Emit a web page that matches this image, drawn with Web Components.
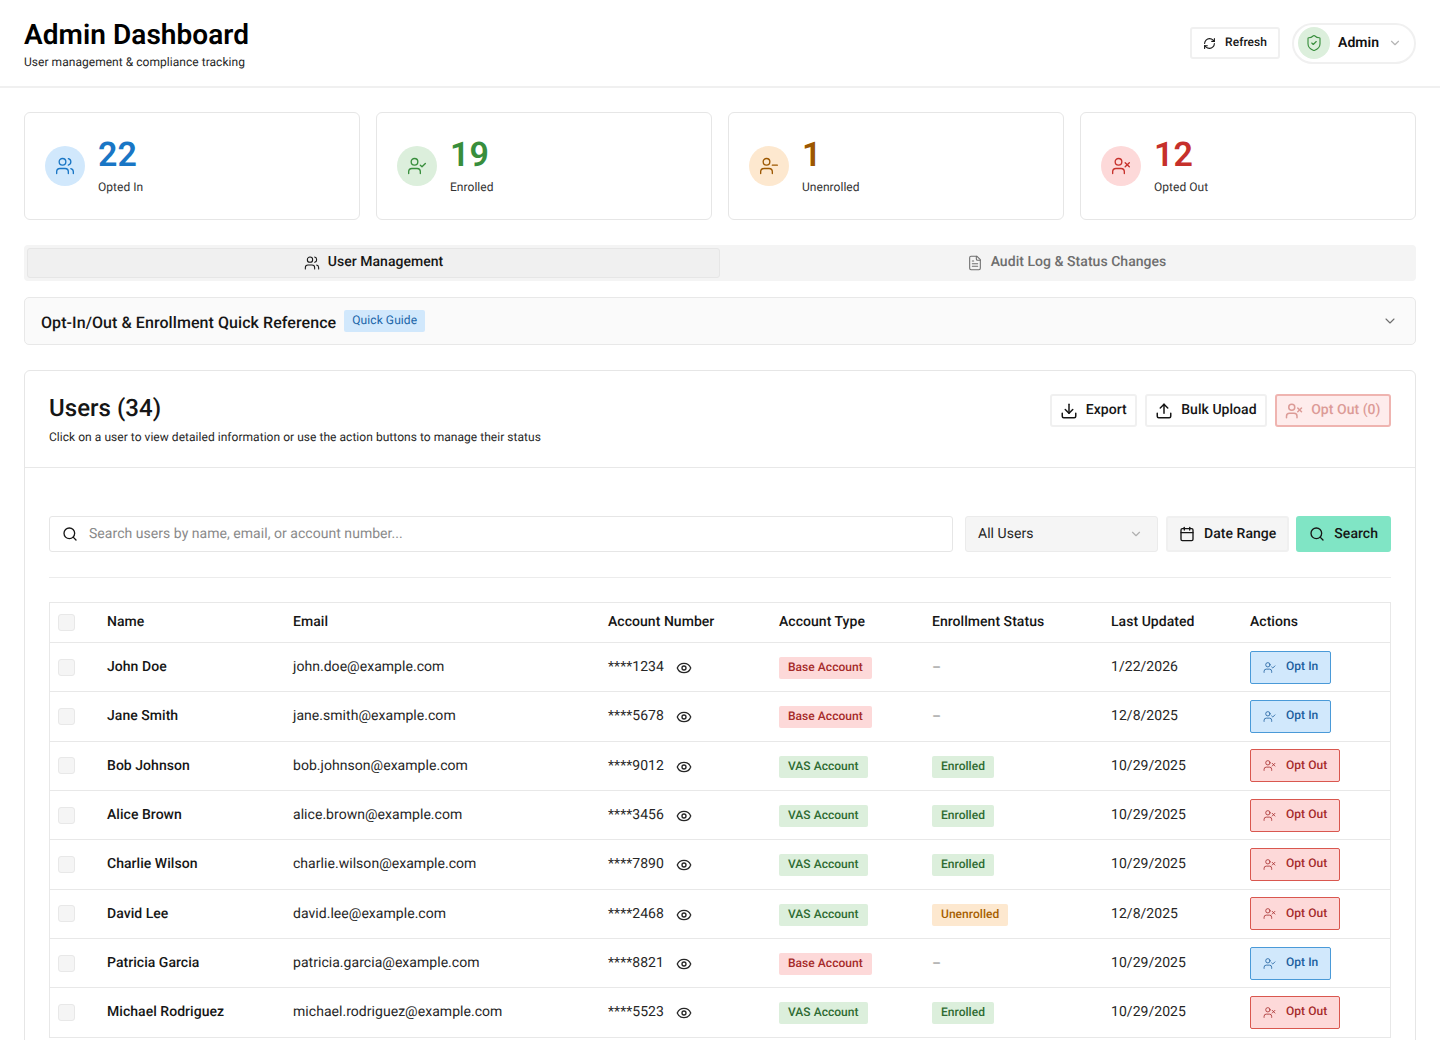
<!DOCTYPE html>
<html lang="en">
<head>
<meta charset="utf-8">
<title>Admin Dashboard</title>
<style>
  html, body { margin: 0; background: #fff; color: #161616; font-family: Roboto, "Liberation Sans", sans-serif; text-rendering: geometricPrecision; letter-spacing: .04px; }
</style>
</head>
<body>
<admin-header></admin-header>
<admin-main></admin-main>

<script>
const ICONS = {
    users: '<path d="M16 21v-2a4 4 0 0 0-4-4H6a4 4 0 0 0-4 4v2"/><circle cx="9" cy="7" r="4"/><path d="M22 21v-2a4 4 0 0 0-3-3.87"/><path d="M16 3.13a4 4 0 0 1 0 7.75"/>',
    userCheck: '<path d="M16 21v-2a4 4 0 0 0-4-4H6a4 4 0 0 0-4 4v2"/><circle cx="9" cy="7" r="4"/><path d="m16 11 2 2 4-4"/>',
    userMinus: '<path d="M16 21v-2a4 4 0 0 0-4-4H6a4 4 0 0 0-4 4v2"/><circle cx="9" cy="7" r="4"/><path d="M22 11h-6"/>',
    userX: '<path d="M16 21v-2a4 4 0 0 0-4-4H6a4 4 0 0 0-4 4v2"/><circle cx="9" cy="7" r="4"/><path d="m17 8 5 5"/><path d="m22 8-5 5"/>',
    refresh: '<path d="M3 12a9 9 0 0 1 9-9 9.75 9.75 0 0 1 6.74 2.74L21 8"/><path d="M21 3v5h-5"/><path d="M21 12a9 9 0 0 1-9 9 9.75 9.75 0 0 1-6.74-2.74L3 16"/><path d="M8 16H3v5"/>',
    shield: '<path d="M20 13c0 5-3.5 7.5-7.66 8.95a1 1 0 0 1-.67-.01C7.5 20.5 4 18 4 13V6a1 1 0 0 1 1-1c2 0 4.5-1.2 6.24-2.72a1.17 1.17 0 0 1 1.52 0C14.51 3.81 17 5 19 5a1 1 0 0 1 1 1z"/><path d="m9 12 2 2 4-4"/>',
    chevron: '<path d="m6 9 6 6 6-6"/>',
    file: '<path d="M15 2H6a2 2 0 0 0-2 2v16a2 2 0 0 0 2 2h12a2 2 0 0 0 2-2V7Z"/><path d="M14 2v4a2 2 0 0 0 2 2h4"/><path d="M8 13h8"/><path d="M8 17h8"/><path d="M8 9h2"/>',
    download: '<path d="M21 15v4a2 2 0 0 1-2 2H5a2 2 0 0 1-2-2v-4"/><path d="m7 10 5 5 5-5"/><path d="M12 15V3"/>',
    upload: '<path d="M21 15v4a2 2 0 0 1-2 2H5a2 2 0 0 1-2-2v-4"/><path d="m17 8-5-5-5 5"/><path d="M12 3v12"/>',
    search: '<circle cx="11" cy="11" r="8"/><path d="m21 21-4.3-4.3"/>',
    calendar: '<path d="M8 2v4"/><path d="M16 2v4"/><rect width="18" height="18" x="3" y="4" rx="2"/><path d="M3 10h18"/>',
    eye: '<path d="M2.06 12.35a1 1 0 0 1 0-.7 10.75 10.75 0 0 1 19.88 0 1 1 0 0 1 0 .7 10.75 10.75 0 0 1-19.88 0"/><circle cx="12" cy="12" r="3"/>'
};

class UiIcon extends HTMLElement {
    connectedCallback() {
        const size = this.getAttribute('size') || 16;
        const weight = this.getAttribute('weight') || 2;
        this.attachShadow({ mode: 'open' }).innerHTML = `
            <style>
                :host { display: inline-flex; flex: none; }
                svg { display: block; }
            </style>
            <svg width="${size}" height="${size}" viewBox="0 0 24 24" fill="none" stroke="currentColor"
                stroke-width="${weight}" stroke-linecap="round" stroke-linejoin="round">${ICONS[this.getAttribute('name')]}</svg>`;
    }
}

class UiButton extends HTMLElement {
    connectedCallback() {
        const icon = this.getAttribute('icon');
        this.attachShadow({ mode: 'open' }).innerHTML = `
            <style>
                :host {
                    display: inline-flex; align-items: center; box-sizing: border-box; height: 33px;
                    padding: 0 8.5px 0 8px; gap: 8px; background: #fff; color: #161616;
                    border: 2px solid #f0f0f0; border-radius: 3px;
                    font: 500 14px Roboto, sans-serif; white-space: nowrap;
                }
                :host([kind=disabled]) { background: #feecec; border-color: #efb4b0; color: #dc9b97; }
                :host([kind=search]) { height: 36px; margin-left: -1px; background: #80e5c5; border-color: #80e5c5; padding: 0 11px 0 11px; gap: 9px; }
                :host([kind=grey]) { height: 36px; background: #f5f5f5; padding: 0 11px 0 11px; gap: 9px; }
                :host([kind=refresh]) { height: 32px; font-size: 12px; padding: 0 11px; gap: 9px; }
                span { position: relative; top: -1px; }
                :host([kind=search]) span, :host([kind=grey]) span { top: 0; }
            </style>
            <ui-icon name="${icon}" size="${this.getAttribute('iconsize') || 18}"></ui-icon>
            <span><slot></slot></span>`;
    }
}

class AdminHeader extends HTMLElement {
    connectedCallback() {
        this.attachShadow({ mode: 'open' }).innerHTML = `
            <style>
                :host {
                    display: flex; justify-content: space-between; align-items: center; box-sizing: border-box;
                    height: 88px; padding: 0 24px; border-bottom: 2px solid #f0f0f0; background: #fff;
                }
                h1 { margin: 0; font: 600 28px/36px Roboto, sans-serif; color: #000; letter-spacing: .06px; }
                p { position: relative; top: -1px; margin: 1px 0 0; font: 400 12px/18px Roboto, sans-serif; color: #262626; }
                .head { padding-top: 3px; }
                .right { display: flex; align-items: center; gap: 12px; }
                .admin {
                    display: flex; align-items: center; box-sizing: border-box; width: 124px; height: 41px;
                    padding-left: 4px; border: 2px solid #f0f0f0; border-radius: 21px;
                    font: 600 14px Roboto, sans-serif; color: #111;
                }
                .badge {
                    display: flex; align-items: center; justify-content: center; width: 32px; height: 32px;
                    border-radius: 50%; background: #dcefdc; color: #388e3c;
                }
                .name { margin-left: 8px; }
                .caret { margin-left: 9px; color: #b5b5b5; }
            </style>
            <div class="head">
                <h1>Admin Dashboard</h1>
                <p>User management &amp; compliance tracking</p>
            </div>
            <div class="right">
                <ui-button kind="refresh" icon="refresh" iconsize="13">Refresh</ui-button>
                <div class="admin">
                    <span class="badge"><ui-icon name="shield" size="18" weight="1.5"></ui-icon></span>
                    <span class="name">Admin</span>
                    <ui-icon class="caret" name="chevron" size="14"></ui-icon>
                </div>
            </div>`;
    }
}

class StatCard extends HTMLElement {
    connectedCallback() {
        const tone = {
            blue: ['#d1e8fc', '#1976c5'],
            green: ['#dcefdc', '#388e3c'],
            orange: ['#fde8cf', '#9c5700'],
            red: ['#fdd9d9', '#c6302b']
        }[this.getAttribute('tone')];
        this.attachShadow({ mode: 'open' }).innerHTML = `
            <style>
                :host {
                    display: flex; align-items: center; box-sizing: border-box; height: 108px; padding: 0 0 0 20px;
                    gap: 13px; background: #fff; border: 1px solid #e6e6e6; border-radius: 6px;
                }
                .circle {
                    display: flex; align-items: center; justify-content: center; width: 40px; height: 40px;
                    border-radius: 50%; background: ${tone[0]}; color: ${tone[1]};
                }
                .txt { margin-top: -3px; }
                b { display: block; position: relative; top: 2px; font: 600 34px/40px Roboto, sans-serif; color: ${tone[1]}; }
                span { display: block; margin-top: 5px; font: 400 12px/18px Roboto, sans-serif; color: #333; }
            </style>
            <div class="circle"><ui-icon name="${this.getAttribute('icon')}" size="20" weight="1.6"></ui-icon></div>
            <div class="txt"><b>${this.getAttribute('value')}</b><span>${this.getAttribute('label')}</span></div>`;
    }
}

class TabBar extends HTMLElement {
    connectedCallback() {
        this.attachShadow({ mode: 'open' }).innerHTML = `
            <style>
                :host {
                    display: grid; grid-template-columns: 1fr 1fr; box-sizing: border-box; height: 36px; padding: 3px;
                    background: #f4f4f4; border-radius: 4px;
                }
                div {
                    display: flex; align-items: center; justify-content: center; gap: 8px; box-sizing: border-box;
                    border: 1px solid transparent; border-radius: 3px; color: #6e6e6e;
                    font: 500 14px Roboto, sans-serif;
                }
                .on { background: #f0f0f0; border-color: #e6e6e6; color: #161616; }
                span { position: relative; top: -1px; }
            </style>
            <div class="on"><ui-icon name="users" size="16" weight="1.6"></ui-icon><span>User Management</span></div>
            <div><ui-icon name="file" size="16" weight="1.6"></ui-icon><span>Audit Log &amp; Status Changes</span></div>`;
    }
}

class QuickReference extends HTMLElement {
    connectedCallback() {
        this.attachShadow({ mode: 'open' }).innerHTML = `
            <style>
                :host {
                    display: flex; align-items: center; box-sizing: border-box; height: 48px; padding: 0 17px 0 16px;
                    background: #fafafa; border: 1px solid #e8e8e8; border-radius: 5px;
                }
                strong { font: 500 16px Roboto, sans-serif; color: #161616; margin-top: 2px; letter-spacing: .07px; }
                em {
                    margin: 0 auto 0 8px; padding: 0 8px; height: 22px; border-radius: 2px;
                    background: #d1e8fc; color: #1a65a8; font: 400 12px/20px Roboto, sans-serif; letter-spacing: .08px;
                }
                ui-icon { color: #6e6e6e; }
            </style>
            <strong>Opt-In/Out &amp; Enrollment Quick Reference</strong>
            <em>Quick Guide</em>
            <ui-icon name="chevron" size="16" weight="1.6"></ui-icon>`;
    }
}

class StatusTag extends HTMLElement {
    connectedCallback() {
        this.attachShadow({ mode: 'open' }).innerHTML = `
            <style>
                :host {
                    display: inline-block; height: 22px; padding: 0 9px; border-radius: 2px; white-space: nowrap;
                    font: 500 12px/21px Roboto, sans-serif;
                }
                :host([tone=red]) { background: #fdd9d9; color: #a52a2a; }
                :host([tone=green]) { background: #dcefdc; color: #2e6b32; }
                :host([tone=orange]) { background: #fde8cf; color: #a65e00; }
            </style>
            <slot></slot>`;
    }
}

class ActionButton extends HTMLElement {
    connectedCallback() {
        const optIn = this.getAttribute('action') === 'in';
        this.attachShadow({ mode: 'open' }).innerHTML = `
            <style>
                :host {
                    display: inline-flex; align-items: center; box-sizing: border-box; height: 33px; border-radius: 2px;
                    padding: 0 12px; gap: 10px;
                    border: 1px solid ${optIn ? '#4a9ad8' : '#d9574f'};
                    background: ${optIn ? '#d1e8fc' : '#fdd9d9'}; color: ${optIn ? '#1b5e9e' : '#a52a2a'};
                    font: 500 12px Roboto, sans-serif;
                }
                span { position: relative; top: -1px; }
            </style>
            <ui-icon name="${optIn ? 'userCheck' : 'userX'}" size="13" weight="1.5"></ui-icon>
            <span>${optIn ? 'Opt In' : 'Opt Out'}</span>`;
    }
}

const COLUMNS = 'grid-template-columns: 49px 186px 315px 171px 153px 179px 139px 1fr;';

class UserRow extends HTMLElement {
    connectedCallback() {
        const a = name => this.getAttribute(name);
        const vas = a('type') === 'vas';
        const status = a('status');
        const statusCell = status
            ? `<status-tag tone="${status === 'Enrolled' ? 'green' : 'orange'}">${status}</status-tag>`
            : '<span class="dash">–</span>';
        this.attachShadow({ mode: 'open' }).innerHTML = `
            <style>
                :host {
                    display: grid; ${COLUMNS} align-items: center; box-sizing: border-box; height: 49.33px;
                    padding-left: 8px; border-top: 1px solid #e8e8e8; font-size: 14px; color: #262626;
                }
                i { display: block; box-sizing: border-box; width: 17px; height: 17px; background: #f5f5f5; border: 1px solid #e8e8e8; border-radius: 3px; }
                .name { font-weight: 500; color: #161616; }
                .acct { display: flex; align-items: center; gap: 12px; }
                .acct ui-icon { color: #262626; margin-top: 2px; }
                .dash { color: #8c8c8c; }
                .tag { padding-top: 2px; }
            </style>
            <i></i>
            <span class="name">${a('name')}</span>
            <span>${a('email')}</span>
            <span class="acct"><span>****${a('account')}</span><ui-icon name="eye" size="16" weight="2"></ui-icon></span>
            <span class="tag"><status-tag tone="${vas ? 'green' : 'red'}">${vas ? 'VAS Account' : 'Base Account'}</status-tag></span>
            <span class="tag">${statusCell}</span>
            <span>${a('updated')}</span>
            <span><action-button action="${vas ? 'out' : 'in'}"></action-button></span>`;
    }
}

class UsersTable extends HTMLElement {
    connectedCallback() {
        const users = [
            ['John Doe', 'john.doe@example.com', '1234', 'base', '', '1/22/2026'],
            ['Jane Smith', 'jane.smith@example.com', '5678', 'base', '', '12/8/2025'],
            ['Bob Johnson', 'bob.johnson@example.com', '9012', 'vas', 'Enrolled', '10/29/2025'],
            ['Alice Brown', 'alice.brown@example.com', '3456', 'vas', 'Enrolled', '10/29/2025'],
            ['Charlie Wilson', 'charlie.wilson@example.com', '7890', 'vas', 'Enrolled', '10/29/2025'],
            ['David Lee', 'david.lee@example.com', '2468', 'vas', 'Unenrolled', '12/8/2025'],
            ['Patricia Garcia', 'patricia.garcia@example.com', '8821', 'base', '', '10/29/2025'],
            ['Michael Rodriguez', 'michael.rodriguez@example.com', '5523', 'vas', 'Enrolled', '10/29/2025']
        ];
        const rows = users.map(u => `<user-row name="${u[0]}" email="${u[1]}" account="${u[2]}" type="${u[3]}" status="${u[4]}" updated="${u[5]}"></user-row>`).join('');
        this.attachShadow({ mode: 'open' }).innerHTML = `
            <style>
                :host { display: block; border: 1px solid #e8e8e8; }
                .head {
                    display: grid; ${COLUMNS} align-items: center; box-sizing: border-box; height: 39px; padding-left: 8px;
                    font: 500 14px Roboto, sans-serif; color: #161616;
                }
                .head span { position: relative; top: -1px; }
                i { display: block; box-sizing: border-box; width: 17px; height: 17px; background: #f5f5f5; border: 1px solid #e8e8e8; border-radius: 3px; }
            </style>
            <div class="head">
                <i></i><span>Name</span><span>Email</span><span>Account Number</span><span>Account Type</span>
                <span>Enrollment Status</span><span>Last Updated</span><span>Actions</span>
            </div>
            ${rows}`;
    }
}

class UsersPanel extends HTMLElement {
    connectedCallback() {
        this.attachShadow({ mode: 'open' }).innerHTML = `
            <style>
                :host { display: block; background: #fff; border: 1px solid #e6e6e6; border-radius: 6px; }
                .top {
                    display: flex; justify-content: space-between; align-items: flex-start; box-sizing: border-box;
                    height: 97px; padding: 23px 24px 0 24px; border-bottom: 1px solid #e8e8e8;
                }
                h2 { margin: -1px 0 0; font: 500 24px/30px Roboto, sans-serif; color: #161616; }
                p { margin: 5px 0 0; font: 400 12px/18px Roboto, sans-serif; color: #262626; }
                .actions { display: flex; gap: 8px; }
                .body { padding: 48px 24px 26px; }
                .filters { display: flex; align-items: stretch; height: 36px; gap: 8px; }
                .search {
                    display: flex; flex: 1; align-items: center; gap: 11px; box-sizing: border-box; padding-left: 12px;
                    border: 1px solid #e6e6e6; border-radius: 3px; font-size: 14px; color: #8a8a8a;
                }
                .search ui-icon { color: #161616; }
                .select {
                    display: flex; align-items: center; justify-content: space-between; box-sizing: border-box; width: 193px;
                    margin-left: 4px; padding: 0 14px 0 12px; background: #f5f5f5; border: 1px solid #ebebeb; border-radius: 3px;
                    font-size: 14px; color: #262626;
                }
                .select ui-icon { color: #b0b0b0; }
                hr { margin: 25px 0 24px; border: 0; border-top: 1px solid #ececec; }
            </style>
            <div class="top">
                <div><h2>Users (34)</h2><p>Click on a user to view detailed information or use the action buttons to manage their status</p></div>
                <div class="actions">
                    <ui-button icon="download">Export</ui-button>
                    <ui-button icon="upload">Bulk Upload</ui-button>
                    <ui-button kind="disabled" icon="userX">Opt Out (0)</ui-button>
                </div>
            </div>
            <div class="body">
                <div class="filters">
                    <div class="search"><ui-icon name="search" size="16"></ui-icon><span>Search users by name, email, or account number...</span></div>
                    <div class="select"><span>All Users</span><ui-icon name="chevron" size="14"></ui-icon></div>
                    <ui-button kind="grey" icon="calendar" iconsize="16">Date Range</ui-button>
                    <ui-button kind="search" icon="search" iconsize="16">Search</ui-button>
                </div>
                <hr>
                <users-table></users-table>
            </div>`;
    }
}

class AdminMain extends HTMLElement {
    connectedCallback() {
        this.attachShadow({ mode: 'open' }).innerHTML = `
            <style>
                :host { display: flex; flex-direction: column; padding: 24px; }
                .stats { display: grid; grid-template-columns: repeat(4, 1fr); gap: 16px; }
                tab-bar { margin-top: 25px; }
                quick-reference { margin-top: 16px; }
                users-panel { margin-top: 25px; }
            </style>
            <div class="stats">
                <stat-card tone="blue" icon="users" value="22" label="Opted In"></stat-card>
                <stat-card tone="green" icon="userCheck" value="19" label="Enrolled"></stat-card>
                <stat-card tone="orange" icon="userMinus" value="1" label="Unenrolled"></stat-card>
                <stat-card tone="red" icon="userX" value="12" label="Opted Out"></stat-card>
            </div>
            <tab-bar></tab-bar>
            <quick-reference></quick-reference>
            <users-panel></users-panel>`;
    }
}

customElements.define('ui-icon', UiIcon);
customElements.define('ui-button', UiButton);
customElements.define('admin-header', AdminHeader);
customElements.define('stat-card', StatCard);
customElements.define('tab-bar', TabBar);
customElements.define('quick-reference', QuickReference);
customElements.define('status-tag', StatusTag);
customElements.define('action-button', ActionButton);
customElements.define('user-row', UserRow);
customElements.define('users-table', UsersTable);
customElements.define('users-panel', UsersPanel);
customElements.define('admin-main', AdminMain);
</script>
</body>
</html>
